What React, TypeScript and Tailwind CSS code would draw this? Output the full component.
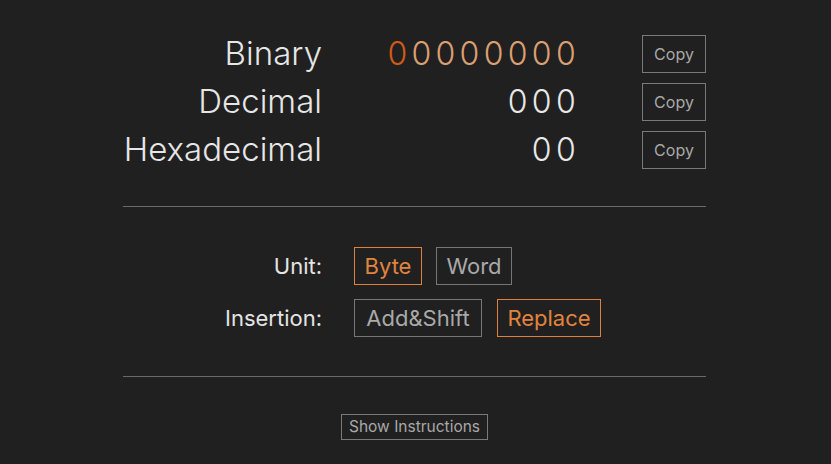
import { useState } from 'react';

const font = { fontFamily: 'Inter, "Noto Sans", sans-serif' };

function Row({ label, children }: { label: string; children: React.ReactNode }) {
  return (
    <div className="flex h-[48px] items-center">
      <div className="w-[199px] text-right text-[33px] font-light text-[#e6e6e6]">{label}</div>
      <div className="flex flex-1 justify-end text-[32px] font-light tracking-[4.3px] mr-[-4px]">{children}</div>
      <button className="ml-[66px] h-[38px] w-[64px] border border-[#7a7a7a] text-[16px] text-[#a8a8a8]">
        Copy
      </button>
    </div>
  );
}

function Opt({ text, active, w, onClick }: { text: string; active: boolean; w: string; onClick: () => void }) {
  return (
    <button
      onClick={onClick}
      className={
        'h-[38px] border text-center text-[22px] ' +
        w +
        (active ? ' border-[#e0803e] text-[#e0843f]' : ' border-[#767676] text-[#a9a9a9]')
      }
    >
      {text}
    </button>
  );
}

export default function App() {
  const [unit, setUnit] = useState('Byte');
  const [mode, setMode] = useState('Replace');
  const bits = '00000000'.split('');

  return (
    <div className="min-h-[464px] bg-[#202020]" style={font}>
      <div className="ml-[123px] w-[583px] pt-[30px]">
        <Row label="Binary">
          {bits.map((b, i) => (
            <span key={i} className={i === 0 ? 'text-[#cf5b17]' : 'text-[#dc9f72]'}>
              {b}
            </span>
          ))}
        </Row>
        <Row label="Decimal">
          <span className="text-[#e8e8e8]">000</span>
        </Row>
        <Row label="Hexadecimal">
          <span className="text-[#e8e8e8]">00</span>
        </Row>

        <div className="mt-[32px] h-px bg-[#6a6a6a]" />

        <div className="mt-[40px] flex flex-col gap-[14px]">
          <div className="flex items-center">
            <div className="w-[199px] text-right text-[22px] text-[#e4e4e4]">Unit:</div>
            <div className="ml-[32px] flex gap-[14px]">
              <Opt text="Byte" w="w-[68px]" active={unit === 'Byte'} onClick={() => setUnit('Byte')} />
              <Opt text="Word" w="w-[76px]" active={unit === 'Word'} onClick={() => setUnit('Word')} />
            </div>
          </div>
          <div className="flex items-center">
            <div className="w-[199px] text-right text-[22px] text-[#e4e4e4]">Insertion:</div>
            <div className="ml-[32px] flex gap-[15px]">
              <Opt text="Add&Shift" w="w-[128px]" active={mode === 'Add&Shift'} onClick={() => setMode('Add&Shift')} />
              <Opt text="Replace" w="w-[104px]" active={mode === 'Replace'} onClick={() => setMode('Replace')} />
            </div>
          </div>
        </div>

        <div className="mt-[39px] h-px bg-[#6a6a6a]" />

        <div className="mt-[37px] flex justify-center">
          <button className="h-[26px] border border-[#7a7a7a] px-[6.5px] text-[15.5px] text-[#a8a8a8]">
            Show Instructions
          </button>
        </div>
      </div>
    </div>
  );
}
